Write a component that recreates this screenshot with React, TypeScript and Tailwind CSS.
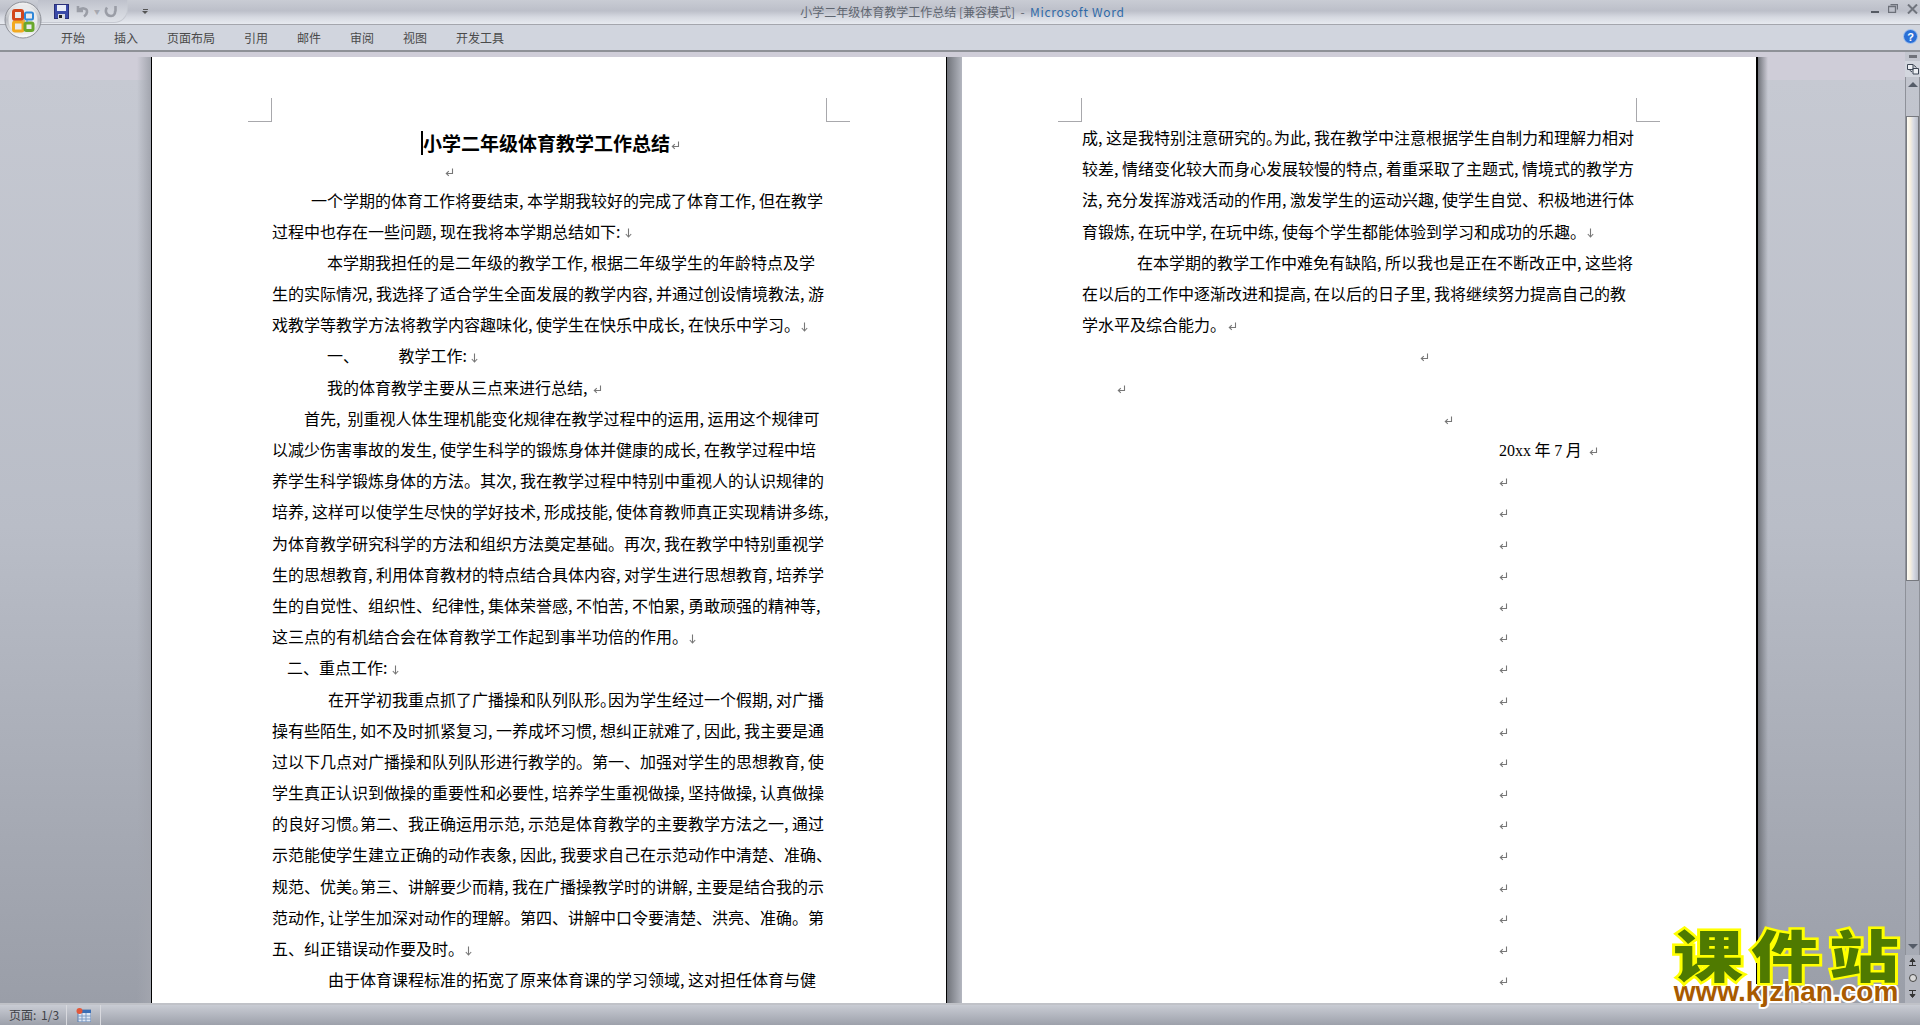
const tabs = ["开始", "插入", "页面布局", "引用", "邮件", "审阅", "视图", "开发工具"];

type Mark = "down" | "ret" | "";

// "。~" is a full stop that Word squeezed to half width on that line
const leftPage: [string, string, Mark][] = [
  ["一个学期的体育工作将要结束,本学期我较好的完成了体育工作,但在教学", "pl-[39px]", ""],
  ["过程中也存在一些问题,现在我将本学期总结如下:", "", "down"],
  ["本学期我担任的是二年级的教学工作,根据二年级学生的年龄特点及学", "pl-[55px]", ""],
  ["生的实际情况,我选择了适合学生全面发展的教学内容,并通过创设情境教法,游", "", ""],
  ["戏教学等教学方法将教学内容趣味化,使学生在快乐中成长,在快乐中学习。", "", "down"],
  ["一、           教学工作:", "pl-[55px]", "down"],
  ["我的体育教学主要从三点来进行总结,", "pl-[55px]", "ret"],
  ["首先, 别重视人体生理机能变化规律在教学过程中的运用,运用这个规律可", "pl-[32px]", ""],
  ["以减少伤害事故的发生,使学生科学的锻炼身体并健康的成长,在教学过程中培", "", ""],
  ["养学生科学锻炼身体的方法。其次,我在教学过程中特别中重视人的认识规律的", "", ""],
  ["培养,这样可以使学生尽快的学好技术,形成技能,使体育教师真正实现精讲多练,", "", ""],
  ["为体育教学研究科学的方法和组织方法奠定基础。再次,我在教学中特别重视学", "", ""],
  ["生的思想教育,利用体育教材的特点结合具体内容,对学生进行思想教育,培养学", "", ""],
  ["生的自觉性、组织性、纪律性,集体荣誉感,不怕苦,不怕累,勇敢顽强的精神等,", "", ""],
  ["这三点的有机结合会在体育教学工作起到事半功倍的作用。", "", "down"],
  ["二、重点工作:", "pl-[15px]", "down"],
  ["在开学初我重点抓了广播操和队列队形。~因为学生经过一个假期,对广播", "pl-[56px]", ""],
  ["操有些陌生,如不及时抓紧复习,一养成坏习惯,想纠正就难了,因此,我主要是通", "", ""],
  ["过以下几点对广播操和队列队形进行教学的。第一、加强对学生的思想教育,使", "", ""],
  ["学生真正认识到做操的重要性和必要性,培养学生重视做操,坚持做操,认真做操", "", ""],
  ["的良好习惯。~第二、我正确运用示范,示范是体育教学的主要教学方法之一,通过", "", ""],
  ["示范能使学生建立正确的动作表象,因此,我要求自己在示范动作中清楚、准确、", "", ""],
  ["规范、优美。~第三、讲解要少而精,我在广播操教学时的讲解,主要是结合我的示", "", ""],
  ["范动作,让学生加深对动作的理解。第四、讲解中口令要清楚、洪亮、准确。第", "", ""],
  ["五、纠正错误动作要及时。", "", "down"],
  ["由于体育课程标准的拓宽了原来体育课的学习领域,这对担任体育与健", "pl-[56px]", ""],
];

const rightPage: [string, string, Mark][] = [
  ["成,这是我特别注意研究的。~为此,我在教学中注意根据学生自制力和理解力相对", "", ""],
  ["较差,情绪变化较大而身心发展较慢的特点,着重采取了主题式,情境式的教学方", "", ""],
  ["法,充分发挥游戏活动的作用,激发学生的运动兴趣,使学生自觉、积极地进行体", "", ""],
  ["育锻炼,在玩中学,在玩中练,使每个学生都能体验到学习和成功的乐趣。", "", "down"],
  ["在本学期的教学工作中难免有缺陷,所以我也是正在不断改正中,这些将", "pl-[55px]", ""],
  ["在以后的工作中逐渐改进和提高,在以后的日子里,我将继续努力提高自己的教", "", ""],
  ["学水平及综合能力。", "", "ret"],
  ["", "pl-[336px]", "ret"],
  ["", "pl-[33px]", "ret"],
  ["", "pl-[360px]", "ret"],
];

function RetMark() {
  return (
    <svg width="9" height="9" viewBox="0 0 9 9" className="inline-block" aria-hidden="true">
      <path d="M7.5 0.5V5.5H1.5M3.8 3.2L1.3 5.5L3.8 7.8" fill="none" stroke="#777" strokeWidth="1.1" />
    </svg>
  );
}

function DownMark() {
  return (
    <svg width="7" height="10" viewBox="0 0 7 10" className="inline-block" aria-hidden="true">
      <path d="M3.5 0.5V9M0.8 6L3.5 9L6.2 6" fill="none" stroke="#777" strokeWidth="1.1" />
    </svg>
  );
}

// half width commas and colons, the way the document font draws them
function Chars({ text }: { text: string }) {
  return (
    <>
      {text.split(/([,:]|。~)/).map((part, i) => {
        if (part === "," || part === ":") {
          return (
            <span key={i} className="inline-block w-2">
              {part}
            </span>
          );
        }
        if (part === "。~") {
          return (
            <span key={i} className="[font-feature-settings:'halt']">
              。
            </span>
          );
        }
        return <span key={i}>{part}</span>;
      })}
    </>
  );
}

function Line({ text, indent, mark }: { text: string; indent: string; mark: Mark }) {
  return (
    <div className={`h-[31.2px] leading-[31.2px] whitespace-pre ${indent}`}>
      <Chars text={text} />
      {mark === "down" && (
        <span className="ml-[1px]">
          <DownMark />
        </span>
      )}
      {mark === "ret" && (
        <span className="ml-[2px]">
          <RetMark />
        </span>
      )}
    </div>
  );
}

function CropMarks() {
  return (
    <>
      <div className="absolute left-[96px] top-[41px] h-[24px] w-[24px] border-r border-b border-[#a8a8ac]" />
      <div className="absolute right-[96px] top-[41px] h-[24px] w-[24px] border-l border-b border-[#a8a8ac]" />
    </>
  );
}

function OfficeButton() {
  return (
    <svg width="40" height="40" viewBox="0 0 40 40" className="absolute left-[4px] top-0" aria-hidden="true">
      <defs>
        <linearGradient id="orb" x1="0" y1="0" x2="0" y2="1">
          <stop offset="0" stopColor="#f4f4f4" />
          <stop offset="0.5" stopColor="#b9bcc2" />
          <stop offset="1" stopColor="#fdfdfd" />
        </linearGradient>
      </defs>
      <circle cx="19" cy="20" r="18" fill="url(#orb)" stroke="#8d9098" />
      <circle cx="19" cy="20" r="14.5" fill="#e9eaec" />
      <rect x="9.5" y="10.5" width="9" height="9" rx="1.5" fill="none" stroke="#d2451a" strokeWidth="3" />
      <rect x="21" y="12.5" width="8" height="7" rx="1.5" fill="none" stroke="#2f87d8" strokeWidth="2" />
      <rect x="9.5" y="22" width="9.5" height="9" rx="1.5" fill="none" stroke="#f2a91f" strokeWidth="3" />
      <rect x="21" y="23" width="8" height="7.5" rx="1.5" fill="none" stroke="#6aa82c" strokeWidth="3" />
      <circle cx="20" cy="21" r="1.2" fill="#e0b050" />
      <circle cx="23" cy="21" r="1" fill="#5aa0d8" />
    </svg>
  );
}

function SaveIcon() {
  return (
    <svg width="15" height="15" viewBox="0 0 15 15" aria-hidden="true">
      <rect x="0.5" y="0.5" width="14" height="14" fill="#3a4aa8" stroke="#2a2f78" />
      <rect x="3" y="1" width="9" height="6" fill="#e8ecf8" />
      <rect x="4" y="10" width="7" height="5" fill="#d8dae2" />
      <rect x="5" y="11" width="3" height="3" fill="#222" />
    </svg>
  );
}

function UndoIcon() {
  return (
    <svg width="14" height="14" viewBox="0 0 14 14" aria-hidden="true">
      <path d="M2 2V7H7M2.5 6.5C5 3.5 11.5 3.5 11 8C10.8 10 9.5 11.5 8 12.5" fill="none" stroke="#9a9da6" strokeWidth="2.6" />
    </svg>
  );
}

function RedoIcon() {
  return (
    <svg width="14" height="14" viewBox="0 0 14 14" aria-hidden="true">
      <path d="M11.5 2V7.5M3 3.5C1 6 1.5 12 7 12C10 12 11.5 9.5 11 6.5" fill="none" stroke="#9a9da6" strokeWidth="2.6" />
    </svg>
  );
}

function TitleBar() {
  return (
    <div className="relative flex h-[25px] shrink-0 items-center justify-center border-b border-[#a4a6ad] bg-[linear-gradient(#c9ccd4_0%,#bcbfc9_45%,#d5d8e0_70%,#e7eaf0_100%)]">
      <div className="absolute left-[38px] top-0 flex h-[23px] w-[90px] items-center gap-[7px] rounded-br-[14px] border-r border-b border-[#c6c9d1] bg-[linear-gradient(#bfc2cc,#dfe2e8)] pl-[16px]">
        <SaveIcon />
        <UndoIcon />
        <span className="-mx-[3px] text-[6px] text-[#a6a8b0]">▼</span>
        <RedoIcon />
      </div>
      <div className="absolute left-[142px] top-[9px] flex flex-col items-center gap-[1px]">
        <div className="h-px w-[5px] bg-[#555]" />
        <div className="h-0 w-0 border-x-[3px] border-t-[3px] border-x-transparent border-t-[#555]" />
      </div>
      <span className="whitespace-pre pl-[5px] text-[12px] text-[#5f6670]">
        小学二年级体育教学工作总结 [兼容模式]  -  <span className="text-[#2f6aa8] tracking-[0.7px]">Microsoft Word</span>
      </span>
      <div className="absolute right-[2px] top-[4px] flex items-start gap-[9px]">
        <div className="mt-[7px] h-[2px] w-[8px] bg-[#555a63]" />
        <svg width="10" height="9" viewBox="0 0 10 9" aria-hidden="true">
          <path d="M2.5 0.5H9.5V5.5M0.5 2.5H7.5V8.5H0.5Z" fill="none" stroke="#6c7079" strokeWidth="1.3" />
        </svg>
        <svg width="11" height="10" viewBox="0 0 11 10" aria-hidden="true">
          <path d="M1 0.5L10 9.5M10 0.5L1 9.5" fill="none" stroke="#70747d" strokeWidth="2" />
        </svg>
      </div>
    </div>
  );
}

function Ribbon() {
  return (
    <div className="relative flex h-[27px] shrink-0 items-center gap-[29px] border-b-2 border-[#8e9197] bg-[#d1d5de] pl-[61px] text-[12px] text-[#4a4a4a]">
      {tabs.map((t) => (
        <span key={t}>{t}</span>
      ))}
      <svg width="15" height="15" viewBox="0 0 15 15" className="absolute right-[2px] top-[4px]" aria-hidden="true">
        <circle cx="7.5" cy="7.5" r="7" fill="#2a6fd6" stroke="#a9c6ee" />
        <text x="7.5" y="11.5" textAnchor="middle" fontSize="11" fontWeight="700" fill="#fff" fontFamily="Liberation Sans">?</text>
      </svg>
    </div>
  );
}

function Scrollbar() {
  return (
    <div className="flex h-full w-[15px] shrink-0 flex-col items-center bg-[linear-gradient(#c3c6cf,#a5a9b3)]">
      <div className="mt-[3px] h-[3px] w-[8px] bg-[#6f727a]" />
      <div className="mt-[3px] flex h-[16px] w-full items-center justify-center bg-[#d3d6de]">
        <svg width="12" height="12" viewBox="0 0 12 12" aria-hidden="true">
          <path d="M0.5 1.5H6V6.5H0.5ZM6 5.5H11.5V11H6Z" fill="#eef0f4" stroke="#3d4654" />
          <path d="M6.5 2L9.5 4.5M5 9L2.5 7" stroke="#3d4654" />
        </svg>
      </div>
      <div className="flex min-h-0 flex-1 flex-col items-center self-stretch border-x border-[#8e9199]">
        <div className="mt-[5px] h-0 w-0 border-x-[5px] border-b-[5px] border-x-transparent border-b-[#555c68]" />
        <div className="mt-[29px] h-[465px] w-full border border-[#77797f] bg-[linear-gradient(90deg,#fdfcf4,#f6efe0_30%,#d8dbe4_60%,#b9bdc8)]" />
        <div className="flex-1" />
        <div className="mb-[6px] h-0 w-0 border-x-[5px] border-t-[5px] border-x-transparent border-t-[#555c68]" />
      </div>
      <div className="flex h-[48px] w-full flex-col items-center justify-around bg-[#b3b6bf] pb-[2px]">
        <svg width="9" height="9" viewBox="0 0 9 9" aria-hidden="true">
          <path d="M4.5 0.5L7 3.5H2ZM4.5 3.5V7M1 7.5H8" fill="#333" stroke="#333" />
        </svg>
        <div className="h-[8px] w-[8px] rounded-full border border-[#444] bg-[#d8d8d8]" />
        <svg width="9" height="9" viewBox="0 0 9 9" aria-hidden="true">
          <path d="M1 1.5H8M4.5 2V5.5M4.5 8.5L7 5.5H2Z" fill="#333" stroke="#333" />
        </svg>
      </div>
    </div>
  );
}

function Watermark() {
  return (
    <div className="pointer-events-none absolute bottom-[20px] left-[1672px] flex w-[228px] flex-col items-center">
      <div className="mb-[3px] flex origin-bottom scale-y-[0.8] gap-[8px] text-[70px] font-black leading-[58px] text-[#4f7a00] [-webkit-text-stroke:6px_#ffff00] [paint-order:stroke_fill]">
        <span>课</span>
        <span>件</span>
        <span>站</span>
      </div>
      <div className="font-['Liberation_Sans',sans-serif] text-[28px] font-bold leading-[26px] text-[#a85a00] [-webkit-text-stroke:4px_#ffffff] [paint-order:stroke_fill]">
        www.kjzhan.com
      </div>
    </div>
  );
}

export default function App() {
  return (
    <div lang="zh-CN" className="relative flex h-[1025px] w-[1920px] flex-col overflow-hidden font-['Noto_Sans_CJK_SC',sans-serif]">
      <TitleBar />
      <Ribbon />
      <OfficeButton />

      <div className="flex min-h-0 flex-1 overflow-hidden">
        <div className="flex h-full min-w-0 flex-1 overflow-hidden bg-[linear-gradient(#cfcdd8_0px,#cfcdd8_28px,#c6c9d2_28px,#b9bdc7_50%,#9a9ea8)] pl-[137px] pt-[5px]">
          <div className="w-[14px] shrink-0 bg-[linear-gradient(90deg,transparent,#a2a5ae)]" />
          <div className="w-px shrink-0 bg-black" />
          <div className="relative h-[1000px] w-[794px] shrink-0 bg-white pl-[120px] text-[16px] text-black">
            <CropMarks />
            <div className="box-content flex h-[31px] items-center pl-[151px] pt-[70px]">
              <span className="-ml-[2px] h-[24px] w-[2px] bg-black" />
              <span className="text-[19px] font-bold leading-[31px]">小学二年级体育教学工作总结</span>
              <span className="ml-[1px]">
                <RetMark />
              </span>
            </div>
            <div className="flex h-[26.5px] items-end pb-[8px] pl-[173px]">
              <RetMark />
            </div>
            {leftPage.map(([text, indent, mark], i) => (
              <Line key={i} text={text} indent={indent} mark={mark} />
            ))}
          </div>
          <div className="w-px shrink-0 bg-black" />
          <div className="w-[15px] shrink-0 bg-[linear-gradient(90deg,#70737a,#b4b7c0)]" />
          <div className="relative h-[1000px] w-[794px] shrink-0 bg-white pl-[120px] pt-[65px] text-[16px] text-black">
            <CropMarks />
            {rightPage.map(([text, indent, mark], i) => (
              <Line key={i} text={text} indent={indent} mark={mark} />
            ))}
            <div className="h-[31.2px] whitespace-pre pl-[417px] leading-[31.2px]">
              <span className="font-['Liberation_Serif',serif]">20xx</span> 年 <span className="font-['Liberation_Serif',serif]">7</span> 月
              <span className="ml-[7px]">
                <RetMark />
              </span>
            </div>
            {Array.from({ length: 17 }).map((_, i) => (
              <div key={i} className="h-[31.2px] pl-[417px] leading-[31.2px]">
                <RetMark />
              </div>
            ))}
          </div>
          <div className="w-[2px] shrink-0 bg-black" />
          <div className="w-[10px] shrink-0 bg-[linear-gradient(90deg,#70737a,transparent)]" />
        </div>
        <Scrollbar />
      </div>

      <div className="flex h-[22px] shrink-0 items-center border-t-2 border-[#c0c2c8] bg-[linear-gradient(#c9ccd4,#9da1ab)] text-[12px] text-[#3f4247]">
        <span className="flex h-full w-[67px] items-center whitespace-pre border-r border-[#d8d9de] pl-[9px]">
          页面<span className="inline-block w-2">:</span>1/3
        </span>
        <span className="flex h-full w-[34px] items-center justify-center border-r border-[#d8d9de]">
          <svg width="15" height="14" viewBox="0 0 15 14" aria-hidden="true">
            <rect x="2" y="2" width="13" height="12" fill="#dfe8f5" stroke="#5a7fb0" />
            <rect x="2" y="2" width="13" height="3" fill="#3b6fb6" />
            <path d="M6 5V14M10 5V14M2 8H15M2 11H15" stroke="#7f9cc4" />
            <circle cx="3.5" cy="3" r="3" fill="#e2583a" />
          </svg>
        </span>
      </div>

      <Watermark />
    </div>
  );
}
